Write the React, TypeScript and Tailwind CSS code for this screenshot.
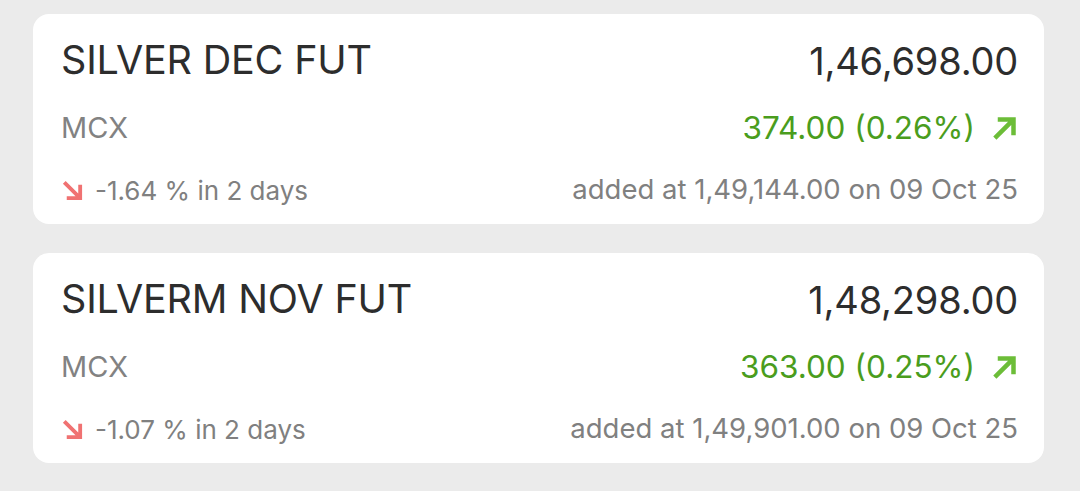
import React from "react";

type Item = {
  name: string;
  price: string;
  exchange: string;
  change: string;
  pct: string;
  added: string;
};

const items: Item[] = [
  {
    name: "SILVER DEC FUT",
    price: "1,46,698.00",
    exchange: "MCX",
    change: "374.00 (0.26%)",
    pct: "-1.64 % in 2 days",
    added: "added at 1,49,144.00 on 09 Oct 25",
  },
  {
    name: "SILVERM NOV FUT",
    price: "1,48,298.00",
    exchange: "MCX",
    change: "363.00 (0.25%)",
    pct: "-1.07 % in 2 days",
    added: "added at 1,49,901.00 on 09 Oct 25",
  },
];

function UpArrow() {
  return (
    <svg width="27" height="27" viewBox="0 0 24 24" className="shrink-0">
      <path d="M6 2v4h9.17L2 19.17 4.83 22 18 8.83V18h4V2z" fill="#6cbd38" />
    </svg>
  );
}

function DownArrow() {
  return (
    <svg width="23" height="23" viewBox="0 0 24 24" className="shrink-0">
      <path d="M6 22v-4h9.17L2 4.83 4.83 2 18 15.17V6h4v16z" fill="#f07272" />
    </svg>
  );
}

function Card({ item }: { item: Item }) {
  return (
    <div className="bg-white rounded-[16px] h-[210px] pl-[28px] pr-[26px] flex flex-col">
      <div className="mt-[22px] h-[50px] flex items-center justify-between">
        <span className="text-[39.5px] text-[#2d2d2d] tracking-[-0.2px]">{item.name}</span>
        <span className="text-[38px] text-[#2d2d2d] tracking-[-0.2px]">{item.price}</span>
      </div>
      <div className="mt-[17px] h-[50px] flex items-center justify-between">
        <span className="text-[29px] text-[#828282]">{item.exchange}</span>
        <span className="flex items-center gap-[16px]">
          <span className="text-[31.5px] text-[#4a9d1d]">{item.change}</span>
          <UpArrow />
        </span>
      </div>
      <div className="mt-[12px] h-[50px] flex items-center justify-between">
        <span className="flex items-center gap-[11px]">
          <DownArrow />
          <span className="text-[26px] text-[#808080]">{item.pct}</span>
        </span>
        <span className="text-[27.5px] text-[#808080]">{item.added}</span>
      </div>
    </div>
  );
}

export default function App() {
  return (
    <div
      className="w-[1080px] h-[491px] bg-[#ebebeb] pt-[14px] pl-[33px] pr-[36px] flex flex-col gap-[29px]"
      style={{ fontFamily: "Inter, 'Noto Sans', sans-serif" }}
    >
      {items.map((it) => (
        <Card key={it.name} item={it} />
      ))}
    </div>
  );
}
